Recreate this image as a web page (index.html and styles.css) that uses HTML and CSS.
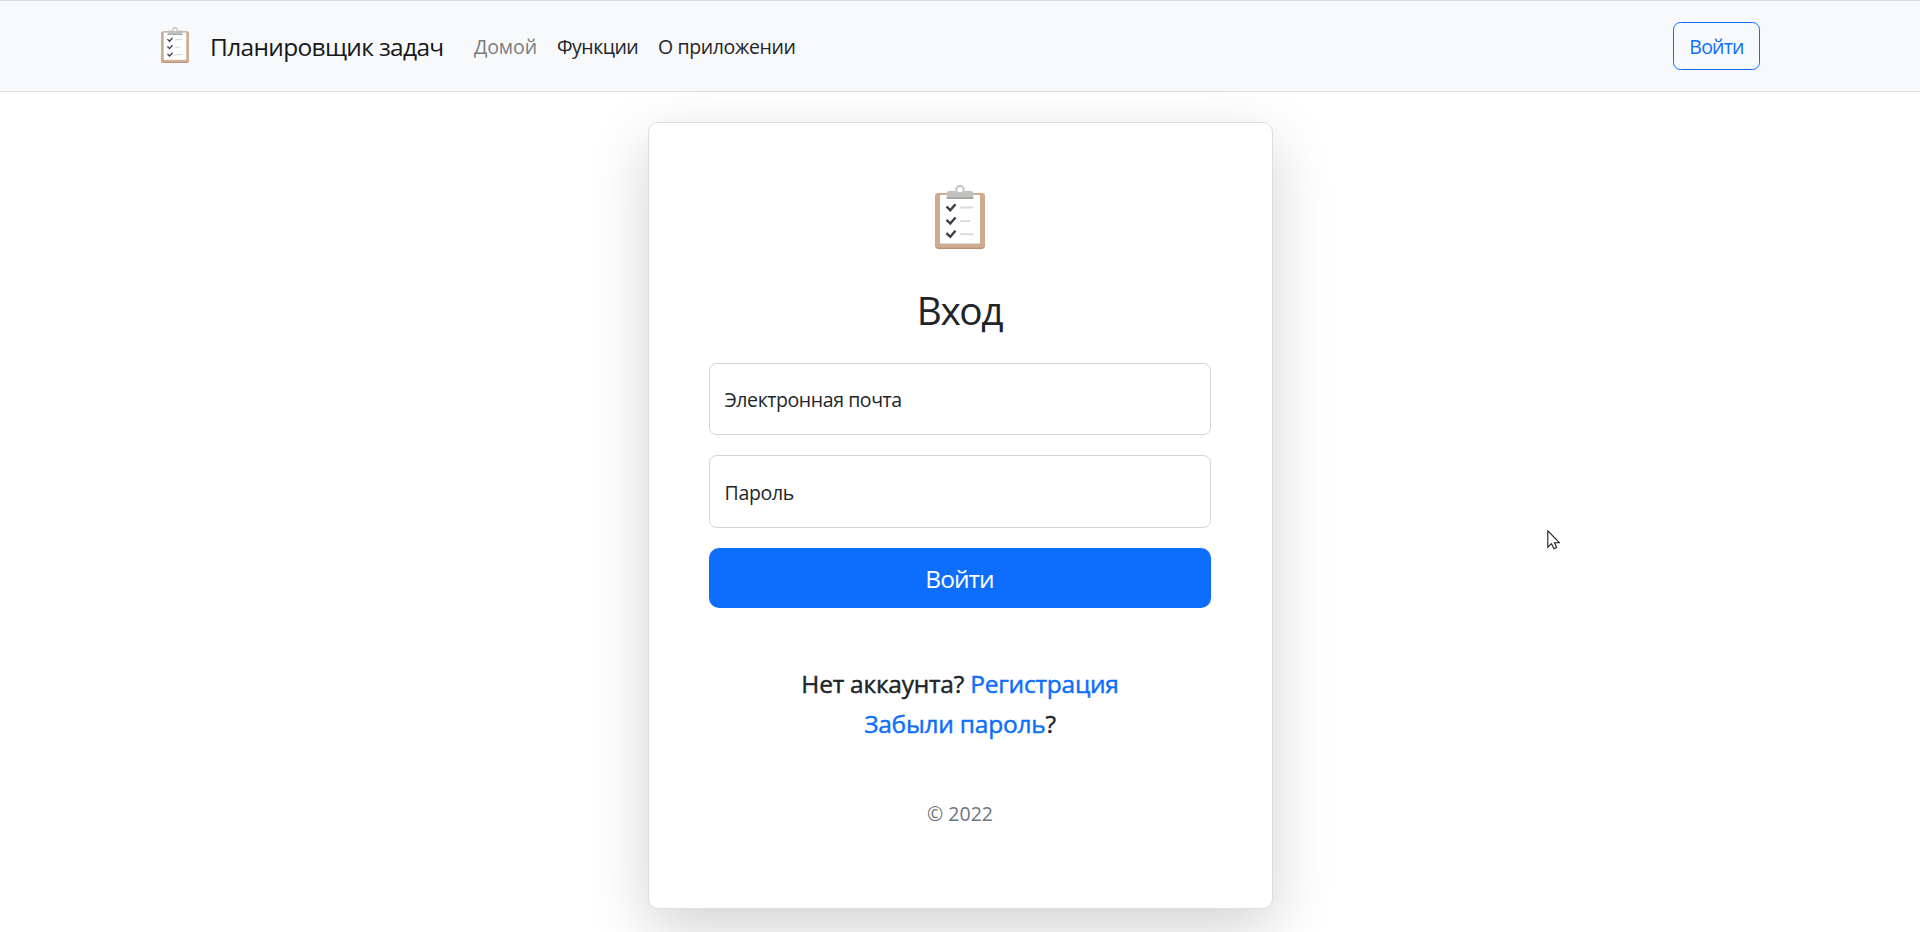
FILE: index.html
```html
<!DOCTYPE html>
<html lang="ru">
<head>
<meta charset="utf-8">
<title>Планировщик задач</title>
<link rel="stylesheet" href="styles.css">
</head>
<body>
<svg class="defs" width="0" height="0" aria-hidden="true">
  <symbol id="clipboard" viewBox="0 0 50 64">
    <rect x="0" y="8" width="50" height="56" rx="4" fill="#b98d70"/>
    <rect x="0" y="8" width="50" height="54.8" rx="4" fill="#cfab91"/>
    <rect x="5" y="10" width="40" height="49" fill="#dcddda"/>
    <rect x="5" y="10" width="40" height="48" fill="#fff"/>
    <circle cx="25" cy="4.7" r="3.7" fill="none" stroke="#c1c1bf" stroke-width="2"/>
    <path d="M12 7.500q0-1.500 1.500-1.500H20q1.500 0 2 1.500h6q.5-1.500 2-1.500h6.500q1.500 0 1.500 1.500V13H12z" fill="#c1c1bf"/>
    <path d="M11.500 12.200h27v1.800h-27z" fill="#a4a4a2"/>
    <g fill="none" stroke="#403a48" stroke-width="2.400"><path d="M11.500 21.500l3.800 3.700 5.200-6"/><path d="M11.500 34.800l3.800 3.700 5.200-6"/><path d="M11.500 48.100l3.800 3.700 5.200-6"/></g>
    <path d="M25 22.500h13.500M25 36h10M25 49.200h13.500" stroke="#dcddda" stroke-width="2"/>
  </symbol>
</svg>
<header class="navbar">
  <div class="container">
    <a class="brand"><svg class="brand-icon"><use href="#clipboard"/></svg><span class="brand-name">Планировщик задач</span></a>
    <nav class="nav"><a class="nav-home">Домой</a><a class="nav-features">Функции</a><a class="nav-about">О приложении</a></nav>
    <a class="login-link">Войти</a>
  </div>
</header>
<main class="card">
  <svg class="card-icon"><use href="#clipboard"/></svg>
  <h1 class="title">Вход</h1>
  <div class="field field-email"><span class="label-email">Электронная почта</span></div>
  <div class="field field-password"><span class="label-password">Пароль</span></div>
  <button class="submit">Войти</button>
  <p class="help"><span class="help-register">Нет аккаунта? <a>Регистрация</a></span><span class="help-forgot"><a>Забыли пароль</a>?</span></p>
  <p class="copyright">© 2022</p>
</main>
<svg class="cursor" viewBox="0 0 13 20"><path d="M.8.8v16.400l3.700-3.500 2.500 5 2.700-1.200-2.200-4.800h4.900z" fill="#fff" stroke="#1e1b2a" stroke-width="1.100"/></svg>
</body>
</html>
```
FILE: styles.css
```css
* { box-sizing: border-box; }
html { height: 100%; overflow: hidden; }
body { margin: 0; height: 932px; overflow: hidden; background: #fff; color: #212529; font: 400 19.5px/30px "Open Sans", "Noto Sans", sans-serif; white-space: nowrap; }
.defs { position: absolute; }
.navbar { height: 92px; background: #f8f9fa; border-top: 1px solid #dcdee1; border-bottom: 1px solid #dee2e6; }
.container { display: flex; align-items: center; width: 1600px; height: 90px; margin: 0 auto; }
.brand { display: flex; align-items: center; color: #16191b; font-size: 24.5px; }
.brand-icon { width: 28px; height: 36px; margin: 0 21px 2px 1px; }
.brand-name { width: 264px; padding-top: 2px; letter-spacing: -.67px; }
.nav { display: flex; flex: 1; padding-top: 2px; }
.nav-home { width: 83px; color: #7a7d80; letter-spacing: -.1px; }
.nav-features { width: 101px; letter-spacing: -.5px; }
.nav-about { letter-spacing: -.37px; }
.login-link { width: 87px; height: 48px; border: 1px solid #0d6efd; border-radius: 7.5px; color: #0d6efd; line-height: 48px; letter-spacing: -.8px; text-align: center; }
.card { display: flex; flex-direction: column; width: 625px; height: 787px; margin: 30px auto 0; padding: 62px 61px 0 60px; border: 1px solid #dcdde5; border-radius: 10px; background: #fff; box-shadow: 0 20px 60px rgba(0, 0, 0, .175); }
.card-icon { flex: none; width: 50px; height: 64px; margin: 0 auto; }
.title { margin: 37px 0 29px; font-size: 38.8px; font-weight: 400; line-height: 48px; letter-spacing: -1.4px; text-align: center; }
.field { display: flex; flex: none; align-items: center; margin-bottom: 20px; padding-left: 15px; border: 1px solid #ced4da; border-radius: 7.5px; }
.field-email { height: 72px; padding-top: 1px; }
.field-password { height: 73px; padding-top: 2px; }
.label-email { letter-spacing: -.42px; }
.label-password { letter-spacing: -.3px; }
.submit { flex: none; height: 60px; padding: 2px 0 0; border: 0; border-radius: 10px; background: #0d6efd; color: #fff; font: 400 24.5px/58px "Open Sans", "Noto Sans", sans-serif; letter-spacing: -.95px; }
.help { display: flex; flex-direction: column; align-items: center; margin: 56px 0 0; padding-left: 1px; font-size: 24.5px; line-height: 40px; letter-spacing: -.23px; -webkit-text-stroke: .45px; }
.help a { color: #0d6efd; }
.copyright { margin: 55px 0 0; padding-left: 1px; color: #6c757d; text-align: center; }
.cursor { position: absolute; left: 1547px; top: 530px; width: 13px; height: 20px; }
```
